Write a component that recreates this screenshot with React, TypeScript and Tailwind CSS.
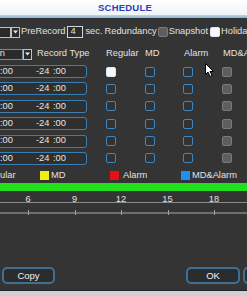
import React from "react";

const font = { fontFamily: '"Liberation Sans", Arial, sans-serif' };

function BlueBox() {
  return <div className="w-[10px] h-[10px] rounded-[2px] border border-[#3f86c0] bg-[#303234] shrink-0" />;
}
function GrayBox() {
  return <div className="w-[10px] h-[10px] rounded-[2px] border border-[#7a7a7a] bg-[#5e5e5e] shrink-0" />;
}
function WhiteBox() {
  return <div className="w-[10px] h-[10px] rounded-[2px] border border-[#dfe9f5] bg-[#f4f8fc] shrink-0" />;
}

function Arrow() {
  return (
    <div className="w-[9px] h-[11px] border border-[#b8c4cc] bg-[#2a2a2a] flex items-center justify-center shrink-0">
      <svg width="5" height="4" viewBox="0 0 5 4"><path d="M0 0.5 L5 0.5 L2.5 3.5 Z" fill="#e8e8e8" /></svg>
    </div>
  );
}

function TimeRow({ first }: { first?: boolean }) {
  return (
    <div className="flex items-center h-[13px]">
      <div className="-ml-[12px] w-[99px] h-[13px] rounded-[3px] border border-[#3b7fb2] bg-[#2f2f2f] flex items-center text-[9.3px] text-[#e4e4e4] leading-none">
        <span className="w-[47px] pl-[11px]">:00</span>
        <span className="w-[17px]">-24</span>
        <span>:00</span>
      </div>
      <div className="ml-[19px]">{first ? <WhiteBox /> : <BlueBox />}</div>
      <div className="ml-[29px]"><BlueBox /></div>
      <div className="ml-[28px]"><BlueBox /></div>
      <div className="ml-[29px]"><GrayBox /></div>
    </div>
  );
}

const hours = [6, 9, 12, 15, 18];

export default function App() {
  return (
    <div className="w-[247px] h-[296px] overflow-hidden bg-[#343434] flex flex-col relative text-[#e2e2e2] text-[9.3px] leading-none" style={font}>
      {/* title */}
      <div className="h-[15px] bg-gradient-to-b from-[#ffffff] to-[#eef4fa] flex items-center justify-center">
        <span className="text-[9.5px] font-bold text-[#2b40b8] tracking-[0.2px] -mr-[3px]">SCHEDULE</span>
      </div>
      <div className="h-[3px] bg-gradient-to-b from-[#bcd4ea] to-[#8fb0cf]" />

      {/* row 1 */}
      <div className="mt-[8px] h-[12px] flex items-center whitespace-nowrap">
        <div className="-ml-[10px] w-[21px] h-[11px] border border-[#b8c4cc] bg-[#2a2a2a] shrink-0" />
        <Arrow />
        <span className="ml-[1px]">PreRecord</span>
        <div className="ml-[2px] w-[16px] h-[12px] border border-[#d0d6dc] bg-[#2c2c2c] flex items-center pl-[2px] shrink-0">4</div>
        <span className="ml-[2px]">sec.</span>
        <span className="ml-[2px]">Redundancy</span>
        <div className="ml-[1px]"><GrayBox /></div>
        <span className="ml-[1px]">Snapshot</span>
        <div className="ml-[2px]"><WhiteBox /></div>
        <span className="ml-[1px]">Holiday</span>
      </div>

      {/* row 2 */}
      <div className="mt-[10px] h-[12px] flex items-center whitespace-nowrap">
        <div className="w-[106px] flex items-center shrink-0">
          <div className="-ml-[20px] w-[43px] h-[11px] border border-[#6f8fa8] bg-[#2a2a2a] flex items-center justify-end pr-[17px] shrink-0">n</div>
          <Arrow />
          <span className="ml-[5px]">Record Type</span>
        </div>
        <span className="w-[39px] shrink-0">Regular</span>
        <span className="w-[39px] shrink-0">MD</span>
        <span className="w-[39px] shrink-0">Alarm</span>
        <span>MD&amp;Alarm</span>
      </div>

      {/* time rows */}
      <div className="mt-[5px] flex flex-col gap-[4.4px]">
        <TimeRow first />
        <TimeRow />
        <TimeRow />
        <TimeRow />
        <TimeRow />
        <TimeRow />
      </div>

      {/* legend */}
      <div className="mt-[6px] h-[10px] flex items-center whitespace-nowrap">
        <span className="w-[40px] shrink-0 -ml-[0px]">ular</span>
        <div className="w-[9px] h-[9px] bg-[#f2ee10] shrink-0" />
        <span className="ml-[2px] w-[59px] shrink-0">MD</span>
        <div className="w-[9px] h-[9px] bg-[#e81010] shrink-0" />
        <span className="ml-[4px] w-[58px] shrink-0">Alarm</span>
        <div className="w-[9px] h-[9px] bg-[#1e90f0] shrink-0" />
        <span className="ml-[2px]">MD&amp;Alarm</span>
      </div>

      {/* green bar */}
      <div className="mt-[2px] h-[8px] bg-[#22e01e]" />

      {/* timeline */}
      <div className="relative h-[24px]">
        {hours.map((h) => (
          <span key={h} className="absolute top-[4px] -translate-x-1/2 text-[9.3px]" style={{ left: -65 + h * 15.5 }}>
            {h}
          </span>
        ))}
        <div className="absolute left-0 right-0 top-[11px] h-px bg-[#8a8a8a]" />
        <div className="absolute left-0 right-0 top-[21px] h-[2px] bg-[#6e6e6e]" />
        {hours.map((h) => (
          <div key={"t" + h} className="absolute top-[19px] w-px h-[5px] bg-[#a0a0a0]" style={{ left: -65 + h * 15.5 }} />
        ))}
      </div>

      <div className="flex-1" />

      {/* buttons */}
      <div className="h-[17px] flex items-center">
        <button className="ml-[2px] w-[53px] h-[17px] rounded-[5px] border-2 border-[#3f6f94] bg-[#2a2c2e] text-[#f0f0f0] text-[9.5px]" style={font}>Copy</button>
        <div className="flex-1" />
        <button className="w-[54px] h-[17px] rounded-[5px] border-2 border-[#3f6f94] bg-[#2a2c2e] text-[#f0f0f0] text-[9.5px]" style={font}>OK</button>
        <button className="ml-[3px] -mr-[40px] w-[44px] h-[17px] rounded-[5px] border-2 border-[#3f6f94] bg-[#2a2c2e] shrink-0" />
      </div>

      <div className="mt-[6px] h-px bg-[#222]" />
      <div className="h-[5px] bg-[#cdd2d6]" />

      {/* cursor */}
      <svg className="absolute left-[205px] top-[63px]" width="10" height="15" viewBox="0 0 10 15">
        <path d="M0.5 0.5 L0.5 11.5 L3 9 L5 13.5 L7 12.5 L5 8.5 L8.5 8.5 Z" fill="#ffffff" stroke="#000000" strokeWidth="1" />
      </svg>
    </div>
  );
}
